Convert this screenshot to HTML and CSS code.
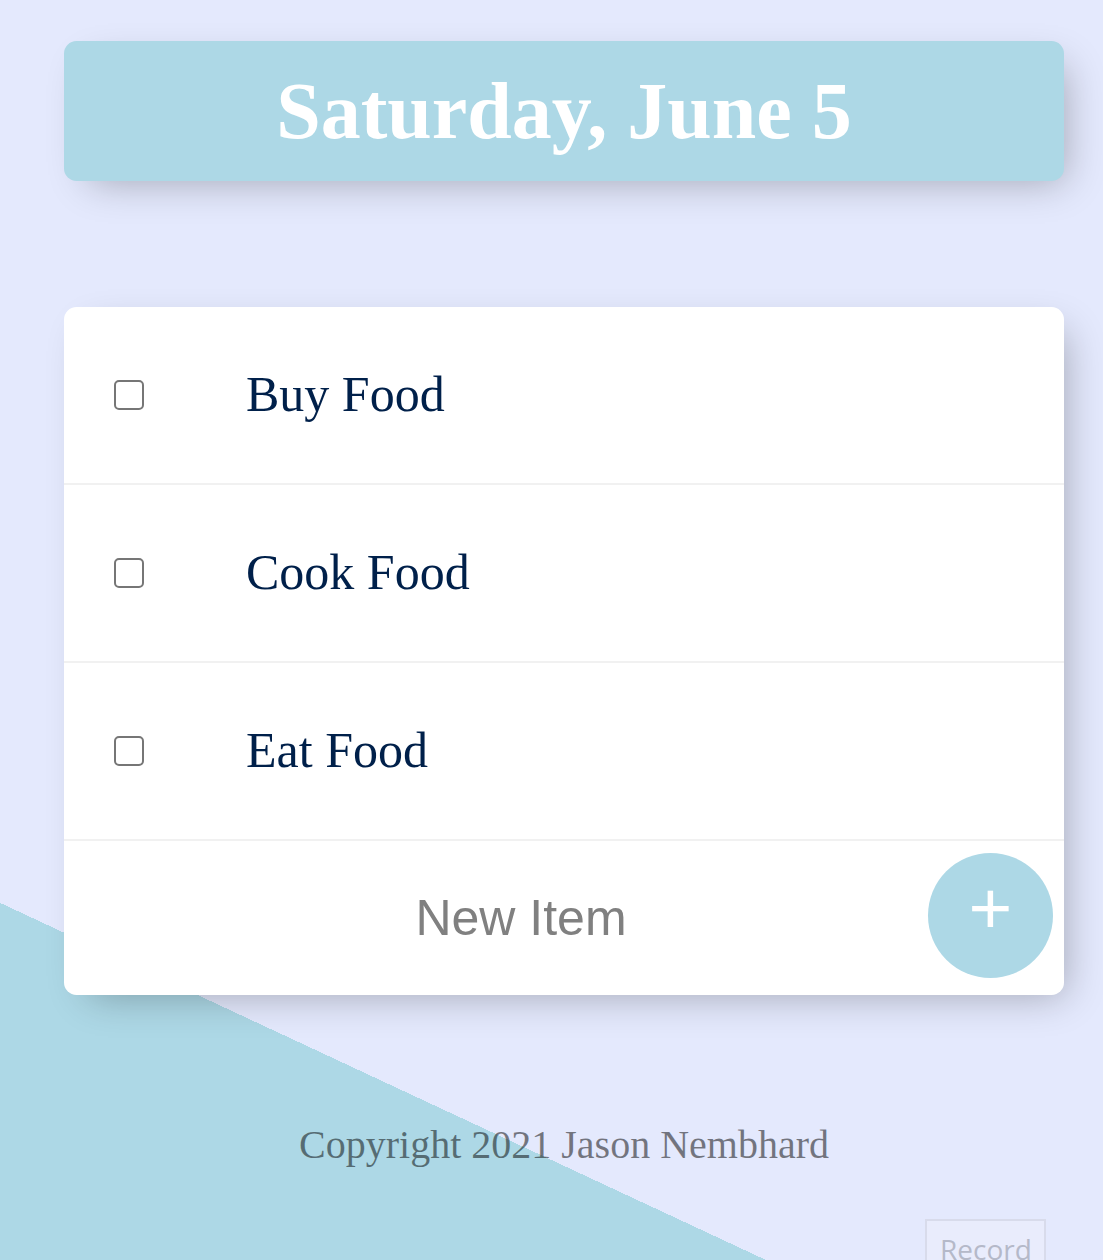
FILE: index.html
```html
<!DOCTYPE html>
<html lang="en">
<head>
<meta charset="utf-8">
<title>To Do List</title>
<link rel="stylesheet" href="styles.css">
</head>
<body>
<div class="page">
  <div class="box heading">
    <h1 class="title">Saturday, June 5</h1>
  </div>
  <div class="box list">
    <div class="item">
      <input class="check" type="checkbox">
      <p class="text">Buy Food</p>
    </div>
    <div class="item">
      <input class="check" type="checkbox">
      <p class="text">Cook Food</p>
    </div>
    <div class="item">
      <input class="check" type="checkbox">
      <p class="text">Eat Food</p>
    </div>
    <form class="item add-form">
      <input class="new-item" type="text" name="newItem" placeholder="New Item" autocomplete="off">
      <button class="add-btn" type="button">+</button>
    </form>
  </div>
  <footer class="footer">Copyright 2021 Jason Nembhard</footer>
</div>
<div class="record">Record</div>
</body>
</html>
```

FILE: styles.css
```css
html {
  height: 100%;
  background-color: #E4E9FD;
  background-image: linear-gradient(25deg, #ADD8E6 50%, #E4E9FD 50%);
  background-repeat: no-repeat;
  background-size: 1103px 2320px;
  background-position: 0 0;
}

body {
  margin: 0;
  font-family: "Liberation Serif", "Times New Roman", serif;
}

.page {
  width: 1000px;
  margin-left: 64px;
  padding-top: 41px;
}

.box {
  background: #ffffff;
  border-radius: 12.5px;
  box-shadow: 12.5px 12.5px 37.5px -12.5px rgba(0, 0, 0, 0.3);
}

.heading {
  background-color: #ADD8E6;
  text-align: center;
  height: 140px;
  display: flex;
  align-items: center;
  justify-content: center;
}

.title {
  margin: 0;
  color: #ffffff;
  font-size: 80px;
  line-height: 90px;
  font-weight: bold;
}

.list {
  margin-top: 126px;
}

.item {
  min-height: 176px;
  display: flex;
  align-items: center;
  border-bottom: 2px solid #F1F1F1;
}

.item:last-child {
  border-bottom: 0;
}

.check {
  appearance: none;
  -webkit-appearance: none;
  width: 30px;
  height: 30px;
  margin: 0 50px;
  border: 2.5px solid #767676;
  border-radius: 5px;
  background: #ffffff;
  flex: none;
}

.text {
  margin: 0;
  padding: 49px 50px 51px 52px;
  font-size: 50px;
  font-weight: normal;
  color: #00204a;
}

.add-form {
  min-height: 154px;
  padding-left: 66px;
}

.new-item {
  width: 782px;
  height: 150px;
  padding: 0;
  border: none;
  background: transparent;
  text-align: center;
  font-family: "Liberation Sans", Arial, sans-serif;
  font-size: 50px;
  color: #00204a;
  outline: none;
}

.new-item::placeholder {
  color: grey;
  opacity: 1;
}

.add-btn {
  width: 125px;
  height: 125px;
  margin-left: 16px;
  margin-bottom: 6px;
  border: 0;
  border-radius: 50%;
  background-color: #ADD8E6;
  color: #ffffff;
  font-family: "Liberation Sans", Arial, sans-serif;
  font-size: 75px;
  line-height: 1;
  padding: 0 0 13px 0;
  flex: none;
}

.footer {
  margin-top: 126px;
  text-align: center;
  font-size: 40px;
  color: rgba(0, 0, 0, 0.5);
}

.record {
  position: fixed;
  left: 925px;
  top: 1219px;
  width: 121px;
  height: 60px;
  box-sizing: border-box;
  border: 2px solid #d8dbeb;
  background: #e9ecfc;
  color: #b5b9c9;
  font-family: "Open Sans", sans-serif;
  font-size: 28px;
  line-height: 1;
  padding: 14px 0 0 13px;
}
```
